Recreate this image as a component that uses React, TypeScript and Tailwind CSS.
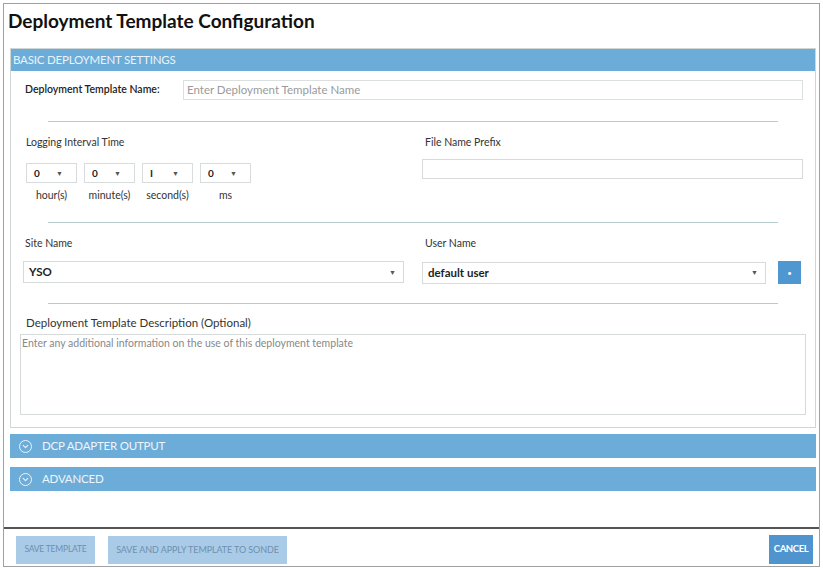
import { ChevronDown } from 'lucide-react';

const font = { fontFamily: 'Lato, "Open Sans", sans-serif' };

function Spinner({ value }: { value: string }) {
  return (
    <div className="flex h-[20px] w-[51px] items-center justify-between border border-[#d8dcdc] bg-white pl-[7px] pr-[13px] text-[10px] font-bold text-[#222]">
      <span>{value}</span>
      <span className="text-[7px] text-[#555]">▼</span>
    </div>
  );
}

function Select({ value }: { value: string }) {
  return (
    <div className="flex h-[22px] flex-1 items-center justify-between border border-[#d6dada] bg-white pl-[5px] pr-[7px] text-[11.5px] font-bold text-[#1e1e1e]">
      <span>{value}</span>
      <span className="text-[7px] text-[#555]">▼</span>
    </div>
  );
}

function Divider() {
  return <div className="mx-[25px] border-t border-[#b5cccc]" />;
}

function AccordionBar({ title }: { title: string }) {
  return (
    <div className="flex h-[24px] items-center gap-[10px] bg-[#6cacd8] pl-[9px] text-[11.5px] text-[#eef5fb]">
      <span className="flex h-[13px] w-[13px] items-center justify-center rounded-full border border-[#eef5fb]">
        <ChevronDown size={9} strokeWidth={3} />
      </span>
      <span className="tracking-[-0.2px]">{title}</span>
    </div>
  );
}

export default function App() {
  const units = [
    { value: '0', label: 'hour(s)' },
    { value: '0', label: 'minute(s)' },
    { value: 'I', label: 'second(s)' },
    { value: '0', label: 'ms' },
  ];

  return (
    <div className="h-[568px] w-[823px] bg-white pl-[3px] pr-[3px] pt-[3px] pb-[1px]" style={font}>
      <div className="flex h-full flex-col border border-[#a0a0a0]">
        {/* Title */}
        <h1 className="pl-[4px] pt-[5px] text-[19px] font-bold leading-[24px] text-[#111]">
          Deployment Template Configuration
        </h1>

        {/* Basic settings panel */}
        <section className="ml-[6px] mr-[3px] mt-[15px] border border-[#cfd6d6]">
          <div className="flex h-[22px] items-center bg-[#6cacd8] pl-[2px] text-[11.5px] tracking-[-0.2px] text-[#eaf3fa]">
            BASIC DEPLOYMENT SETTINGS
          </div>

          <div className="px-[12px] pb-[12px]">
            <div className="mt-[9px] flex items-center">
              <label className="w-[160px] pl-[2px] text-[10.5px] font-semibold text-[#222]">
                Deployment Template Name:
              </label>
              <div className="flex h-[20px] flex-1 items-center border border-[#dcdfdf] px-[3px] text-[11.5px] text-[#9a9a9a]">
                Enter Deployment Template Name
              </div>
            </div>

            <div className="mt-[21px]">
              <Divider />
            </div>

            <div className="mt-[13px] grid grid-cols-2 gap-[18px]">
              <div className="pl-[3px]">
                <div className="text-[10.5px] leading-[14px] text-[#333]">Logging Interval Time</div>
                <div className="mt-[14px] flex gap-[7px]">
                  {units.map((u, i) => (
                    <div key={i} className="flex w-[51px] flex-col items-center">
                      <Spinner value={u.value} />
                      <span className="mt-[5px] text-[10.5px] leading-[14px] text-[#333]">{u.label}</span>
                    </div>
                  ))}
                </div>
              </div>
              <div>
                <div className="pl-[3px] text-[10.5px] leading-[14px] text-[#333]">File Name Prefix</div>
                <div className="mt-[10px] h-[20px] border border-[#d6dada] bg-white" />
              </div>
            </div>

            <div className="mt-[20px]">
              <Divider />
            </div>

            <div className="mt-[13px] grid grid-cols-2 gap-[18px]">
              <div>
                <div className="pl-[2px] text-[10.5px] leading-[14px] text-[#333]">Site Name</div>
                <div className="mt-[11px] flex">
                  <Select value="YSO" />
                </div>
              </div>
              <div>
                <div className="pl-[3px] text-[10.5px] leading-[14px] text-[#333]">User Name</div>
                <div className="mt-[11px] flex items-center gap-[12px]">
                  <Select value="default user" />
                  <button className="mr-[2px] flex h-[23px] w-[23px] items-center justify-center bg-[#4f97d0] text-[8px] text-white">
                    •
                  </button>
                </div>
              </div>
            </div>

            <div className="mt-[19px]">
              <Divider />
            </div>

            <div className="mt-[12px] pl-[3px] text-[11.5px] leading-[14px] text-[#333]">
              Deployment Template Description (Optional)
            </div>
            <div className="-mx-[3px] mt-[4px] h-[81px] border border-[#d6dada] px-[1px] pt-[1px] text-[10.5px] text-[#888]">
              Enter any additional information on the use of this deployment template
            </div>
          </div>
        </section>

        {/* Collapsed sections */}
        <div className="ml-[6px] mr-[3px] mt-[6px] flex flex-col gap-[9px]">
          <AccordionBar title="DCP ADAPTER OUTPUT" />
          <AccordionBar title="ADVANCED" />
        </div>

        <div className="flex-1" />

        {/* Footer */}
        <div className="border-t-2 border-[#555]" />
        <div className="flex items-center justify-between px-[12px] pb-[2px] pt-[6px]">
          <div className="flex gap-[13px]">
            <button className="h-[28px] w-[79px] bg-[#a9cbe8] text-[8.5px] tracking-[-0.2px] text-[#6f8fae]">
              SAVE TEMPLATE
            </button>
            <button className="h-[28px] w-[179px] bg-[#a9cbe8] text-[9px] tracking-[-0.1px] text-[#6f8fae]">
              SAVE AND APPLY TEMPLATE TO SONDE
            </button>
          </div>
          <button className="mr-[-6px] h-[29px] w-[44px] bg-[#4f94cf] text-[9.5px] font-bold tracking-[-0.4px] text-white">
            CANCEL
          </button>
        </div>
      </div>
    </div>
  );
}
